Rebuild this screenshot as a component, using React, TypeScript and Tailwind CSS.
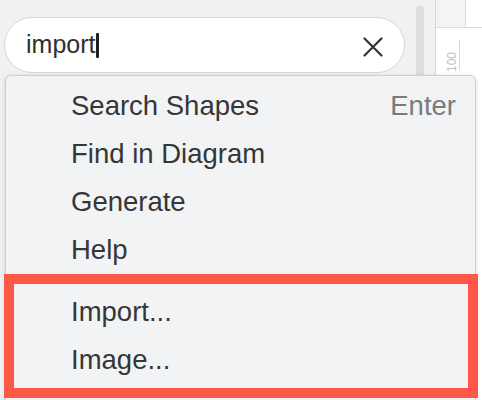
import React from "react";

const Row = ({ label, hint, pl }: { label: string; hint?: string; pl: string }) => (
  <div className={`flex h-[48px] items-center justify-between pr-[19px] leading-[48px] ${pl}`}>
    <span className="text-[#363636]">{label}</span>
    {hint && <span className="text-[#7a7a7a]">{hint}</span>}
  </div>
);

export default function App() {
  return (
    <div className="relative flex h-[400px] w-[482px] overflow-hidden bg-white font-['Liberation_Sans',Arial,sans-serif]">
      {/* sidebar */}
      <div className="flex h-full w-[436px] shrink-0 border-r border-[#d8d8d8] bg-[#f0f1f3]">
        <div className="w-[416px] shrink-0 pl-[4px] pt-[17px]">
          <div className="flex h-[56px] w-[401px] items-center rounded-full border border-[#d6d6d6] bg-white pl-[21px] pr-[21px]">
            <div className="flex flex-1 items-center text-[25px] text-[#2f2f2f]">
              <span>import</span>
              <span className="ml-[1px] h-[25px] w-[3px] rounded-[1px] bg-[#1f1f1f]" />
            </div>
            <svg width="20" height="20" viewBox="0 0 20 20" className="mt-[3px]">
              <path d="M1.5 1.5 L18.5 18.5 M18.5 1.5 L1.5 18.5" stroke="#333" strokeWidth="2.2" strokeLinecap="round" />
            </svg>
          </div>
        </div>
        <div className="mt-[6px] h-[120px] w-[8px] shrink-0 rounded-t-[3px] bg-[#dedede]" />
      </div>

      {/* ruler */}
      <div className="flex flex-1 flex-col">
        <div className="flex h-[28px] border-b border-[#dcdcdc]">
          <div className="w-[30px] border-r border-[#dcdcdc] bg-[#f4f4f4]" />
          <div className="flex-1 bg-white" />
        </div>
        <div className="relative flex-1 bg-white">
          <div className="absolute left-[10px] top-[44px] flex h-[12px] w-[32px] origin-top-left -rotate-90 items-center text-[12px] leading-none text-[#bdbdbd]">
            <span>100</span>
          </div>
          <div className="absolute left-[23px] top-[12px] h-[30px] w-[1px] bg-[#d8d8d8]" />
        </div>
      </div>

      {/* dropdown menu */}
      <div className="absolute left-[5px] top-[75px] h-[340px] w-[471px] rounded-t-[6px] border border-[#cfcfcf] bg-[#f2f3f5] pt-[6px] text-[27.5px] shadow-[0_1px_4px_rgba(0,0,0,0.15)]">
        <Row label="Search Shapes" hint="Enter" pl="pl-[65px]" />
        <Row label="Find in Diagram" pl="pl-[65px]" />
        <Row label="Generate" pl="pl-[65px]" />
        <Row label="Help" pl="pl-[65px]" />
        <div className="-ml-[2px] -mr-[3px] mt-0 border-[10px] border-[#ff5849] pb-[4.5px] pt-[3.5px]">
          <Row label="Import..." pl="pl-[57px]" />
          <Row label="Image..." pl="pl-[57px]" />
        </div>
      </div>
    </div>
  );
}
